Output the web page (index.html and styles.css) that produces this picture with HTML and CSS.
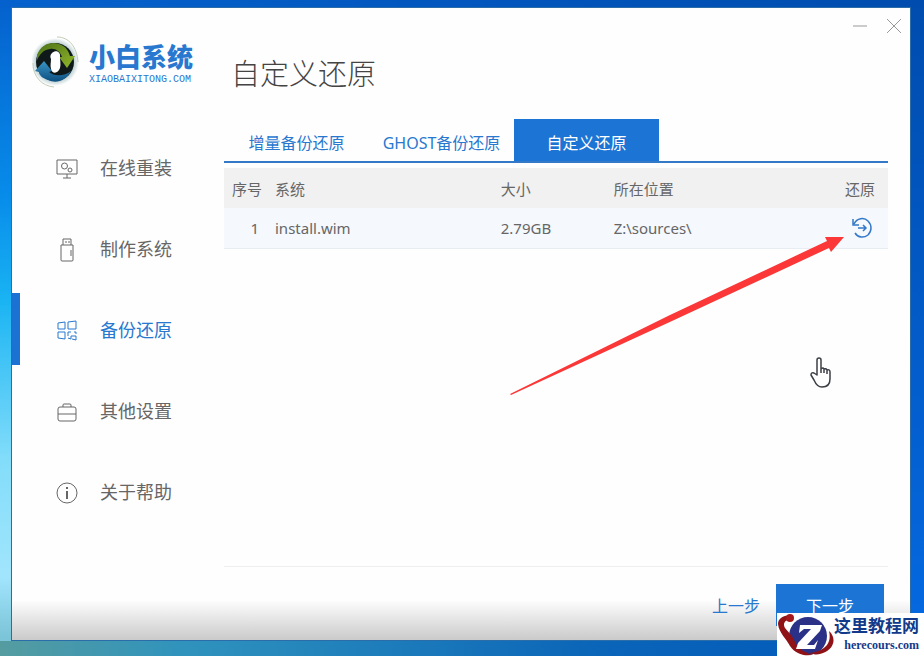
FILE: index.html
```html
<!DOCTYPE html>
<html lang="zh-CN">
<head>
  <meta charset="UTF-8" />
  <meta name="viewport" content="width=device-width, initial-scale=1.0" />
  <title>小白系统 - 自定义还原</title>
  <link rel="stylesheet" href="styles.css">
</head>
<body>
  <div class="window">
    <aside class="sidebar">
      <div class="logo">
        <svg class="logo-mark" viewBox="0 0 50 54" aria-hidden="true">
          <defs>
            <linearGradient id="green" x1="0" y1="0" x2="1" y2="1">
              <stop offset="0" stop-color="#4a7018" />
              <stop offset="1" stop-color="#93b82a" />
            </linearGradient>
            <linearGradient id="blue" x1="0" y1="0" x2="0" y2="1">
              <stop offset="0" stop-color="#3a94c4" />
              <stop offset="1" stop-color="#0c4f80" />
            </linearGradient>
            <radialGradient id="halo">
              <stop offset="0.7" stop-color="#a8bfc4" />
              <stop offset="0.9" stop-color="#dfe9ea" />
              <stop offset="1" stop-color="#ffffff" />
            </radialGradient>
          </defs>
          <circle cx="23" cy="26" r="24" fill="url(#halo)" />
          <path d="M25 1C37 1 45 11 46 26M22 51C10 50 1 41 1 27" fill="none" stroke="#c3cdb8" stroke-width="1" />
          <circle cx="23" cy="26" r="19" fill="#10191a" />
          <path d="M5 19C9 8 19 5 27 8C34 10 37 16 38 20L43 20 35 32 27 21 30 21C28 15 23 12 18 13C11 14 8 18 5 24Z" fill="url(#green)" />
          <path d="M3 35L12 25 20 35 17 36C21 40 32 41 39 35C34 45 24 48 16 44 10 42 7 39 7 36Z" fill="url(#blue)" />
          <path d="M20 17C24 13 29 16 28 21C28 25 29 28 28 32C26 38 20 38 19 33C18 29 19 27 19 23C18 21 18 19 20 17Z" fill="#fff" />
        </svg>
        <div class="logo-text">
          <span class="logo-name">小白系统</span>
          <span class="logo-url">XIAOBAIXITONG.COM</span>
        </div>
      </div>

      <nav class="menu">
        <a href="#reinstall">
          <svg viewBox="0 0 22 22"><path d="M1 2h20v14H1zM11 16v4M7 20h8" /><circle cx="8.500" cy="8" r="3" /><circle cx="14" cy="12" r="2" /></svg>
          在线重装
        </a>
        <a href="#make">
          <svg viewBox="0 0 22 22"><path d="M7 6V0h8v6M5 6h12v15a1 1 0 0 1-1 1H6a1 1 0 0 1-1-1zM10 2v2M13 2v2M15 11v6" /></svg>
          制作系统
        </a>
        <a href="#backup" class="active">
          <svg viewBox="0 0 22 22"><path d="M2 3l7-1v7H2zM12 2l8-1v8h-8zM2 12h7v7l-7-1zM15 12h-3v4M18 12h2v2M20 16v4l-4-1M12 18l3 1v-3h5" /></svg>
          备份还原
        </a>
        <a href="#settings">
          <svg viewBox="0 0 22 22"><rect x="2" y="6" width="18" height="14" rx="2" /><path d="M7 6V4q0-1 1-1h6q1 0 1 1v2M2 13h18" /></svg>
          其他设置
        </a>
        <a href="#about">
          <svg viewBox="0 0 22 22"><circle cx="11" cy="11" r="10" /><path d="M11 9v8M11 5v2" stroke-width="2" /></svg>
          关于帮助
        </a>
      </nav>
    </aside>

    <main class="content">
      <header class="header">
        <h1>自定义还原</h1>
        <div class="controls">
          <button type="button" aria-label="最小化"><svg viewBox="0 0 16 16"><path d="M1 8h14" /></svg></button>
          <button type="button" aria-label="关闭"><svg viewBox="0 0 16 16"><path d="M1 1l14 14M15 1L1 15" /></svg></button>
        </div>
      </header>

      <div class="tabs">
        <button type="button">增量备份还原</button>
        <button type="button">GHOST备份还原</button>
        <button type="button" class="active">自定义还原</button>
      </div>

      <table class="images">
        <thead>
          <tr>
            <th class="col-no">序号</th>
            <th class="col-name">系统</th>
            <th class="col-size">大小</th>
            <th>所在位置</th>
            <th class="col-action">还原</th>
          </tr>
        </thead>
        <tbody>
          <tr>
            <td class="col-no">1</td>
            <td>install.wim</td>
            <td>2.79GB</td>
            <td>Z:\sources\</td>
            <td class="col-action">
              <button type="button" class="restore" aria-label="还原">
                <svg viewBox="0 0 20 20"><path d="M1 1v6h6M2 6C5 0 12-1 16 3C20 7 20 13 16 17C12 20 6 20 3 15M6 10h8M11 7l3 3-3 3" /></svg>
              </button>
            </td>
          </tr>
        </tbody>
      </table>

      <footer class="footer">
        <button type="button" class="prev">上一步</button>
        <button type="button" class="next">下一步</button>
      </footer>
    </main>
  </div>

  <svg class="arrow" viewBox="0 0 334 160" aria-hidden="true">
    <path d="M0 158L160 79 317 5 315 1 334 1 321 16 319 12 162 85 1 159Z" fill="#fb3737" />
  </svg>

  <svg class="hand" viewBox="0 0 22 32" aria-hidden="true">
    <path d="M7 18V3q0-2 2-2t2 2v9q2-2 3 0 2-1 3 1 3-1 3 2v7q0 8-8 8-5 0-8-7l-3-5q0-3 3-2zM11 12v4M14 12v4M17 13v4" fill="#fff" stroke="#3c3f46" stroke-width="1.500" stroke-linejoin="round" />
  </svg>

  <div class="watermark">
    <svg viewBox="0 0 58 43" aria-hidden="true">
      <circle cx="31" cy="23" r="19" fill="#2b3186" />
      <path d="M16 4C10 0 1 4 1 11C2 20 9 25 13 33C19 42 30 44 38 41C28 41 22 36 18 29C15 22 12 20 8 15C5 10 9 6 15 7ZM52 18C60 25 57 36 46 40C40 42 34 42 30 40C42 40 56 34 52 18Z" fill="#8f1216" />
      <circle cx="13" cy="5" r="4" fill="#a5181c" />
      <path d="M23 12h22l-2 6-13 14h7l4-5-3 9H19l2-6 13-14h-7l-5 4z" fill="#fff" />
    </svg>
    <div class="watermark-text">
      <strong>这里教程网</strong>
      <span>herecours.com</span>
    </div>
  </div>
</body>
</html>
```

FILE: styles.css
```css
* {
  margin: 0;
  padding: 0;
  box-sizing: border-box;
}

body {
  position: relative;
  display: flex;
  min-height: 100vh;
  padding: 8px 14px 16px 12px;
  font-family: "Noto Sans", "Noto Sans CJK SC", sans-serif;
  color: #666;
  background:
    linear-gradient(90deg, #0561cd, #004cae) top / 100% 8px no-repeat,
    linear-gradient(90deg, #559ca0 0%, #2f93bd 20%, #0a64b8 65%, #005abc 100%) bottom / 100% 15px no-repeat,
    linear-gradient(180deg, #004cae, #056ae2) right / 14px 100% no-repeat,
    linear-gradient(180deg, #0561cd 0%, #078cea 30%, #1ab4f3 46%, #82ddfa 70%, #a1e5fc 88%, #7cc4d8 97%);
}

svg {
  display: block;
}

button {
  font-family: inherit;
  border: none;
  background: none;
  cursor: pointer;
}

.window {
  display: flex;
  flex: 1;
  background: linear-gradient(0deg, #cacaca 0, #fefefe 40px);
  box-shadow: 0 0 0 1px #2a6da8;
}

/* Sidebar */
.sidebar {
  width: 212px;
}

.logo {
  display: flex;
  align-items: center;
  gap: 7px;
  height: 123px;
  padding: 0 0 14px 20px;
}

.logo-mark {
  width: 50px;
  height: 54px;
}

.logo-text {
  display: flex;
  flex-direction: column;
  color: #2878d0;
}

.logo-name {
  font-size: 26px;
  font-weight: 900;
  line-height: 34px;
}

.logo-url {
  font-family: "Liberation Mono", monospace;
  font-size: 10px;
  line-height: 12px;
}

.menu {
  display: flex;
  flex-direction: column;
  gap: 9px;
}

.menu a {
  display: flex;
  align-items: center;
  gap: 22px;
  height: 72px;
  padding-left: 36px;
  border-left: 8px solid transparent;
  font-size: 18px;
  color: #666;
  text-decoration: none;
}

.menu a.active {
  border-left-color: #1c72d2;
  color: #2878d0;
}

.menu svg {
  width: 22px;
  height: 22px;
  margin-top: 4px;
  fill: none;
  stroke: currentColor;
  overflow: visible;
}

/* Content */
.content {
  display: flex;
  flex-direction: column;
  flex: 1;
  padding-right: 22px;
}

.header {
  display: flex;
  justify-content: space-between;
  align-items: flex-start;
  height: 111px;
  margin-right: -14px;
}

.header h1 {
  padding: 44px 0 0 7px;
  font-size: 29px;
  font-weight: 300;
  line-height: 44px;
  color: #444;
}

.controls {
  display: flex;
  gap: 18px;
  padding-top: 10px;
}

.controls svg {
  width: 16px;
  height: 16px;
  fill: none;
  stroke: #999;
}

.tabs {
  display: flex;
  border-bottom: 2px solid #3478c8;
}

.tabs button {
  width: 145px;
  height: 42px;
  padding-top: 3px;
  font-size: 16px;
  color: #2878d0;
}

.tabs button.active {
  background: #1c74d4;
  color: #fff;
}

.images {
  width: 100%;
  margin-top: 5px;
  table-layout: fixed;
  border-collapse: collapse;
  font-size: 15px;
}

.images th,
.images td {
  height: 40px;
  padding-left: 8px;
  font-weight: 400;
  text-align: left;
}

.images th {
  background: #f2f1f1;
}

.images td {
  background: #f5f8fd;
  border-bottom: 1px solid #e8edf3;
}

.images .col-no {
  width: 43px;
}

.images td.col-no {
  padding-right: 8px;
  text-align: right;
}

.images .col-name {
  width: 34%;
}

.images .col-size {
  width: 17%;
}

.images .col-action {
  width: 51px;
}

.restore {
  display: block;
  margin-left: 7px;
}

.restore svg {
  width: 20px;
  height: 20px;
  fill: none;
  stroke: #3478c8;
  stroke-width: 1.5;
  overflow: visible;
}

.footer {
  display: flex;
  justify-content: flex-end;
  margin-top: auto;
  padding: 17px 4px 14px 0;
  border-top: 1px solid #eee;
}

.footer button {
  height: 42px;
  font-size: 16px;
}

.prev {
  width: 80px;
  color: #2878d0;
}

.footer .next {
  width: 108px;
  background: #1c74d4;
  color: #fff;
}

/* Overlays */
.arrow {
  position: absolute;
  left: 510px;
  top: 236px;
  width: 334px;
  height: 160px;
  pointer-events: none;
}

.hand {
  position: absolute;
  left: 810px;
  top: 357px;
  width: 22px;
  height: 32px;
  pointer-events: none;
}

.watermark {
  position: absolute;
  right: 0;
  bottom: 0;
  display: flex;
  width: 147px;
  height: 43px;
  background: #fff;
}

.watermark svg {
  width: 58px;
  height: 43px;
}

.watermark-text {
  display: flex;
  flex-direction: column;
  align-items: flex-end;
  width: 84px;
  color: #123a8a;
  white-space: nowrap;
}

.watermark-text strong {
  font-size: 17px;
  line-height: 26px;
}

.watermark-text span {
  font-family: "Liberation Serif", serif;
  font-size: 12px;
  font-weight: 700;
  line-height: 12px;
}
```
